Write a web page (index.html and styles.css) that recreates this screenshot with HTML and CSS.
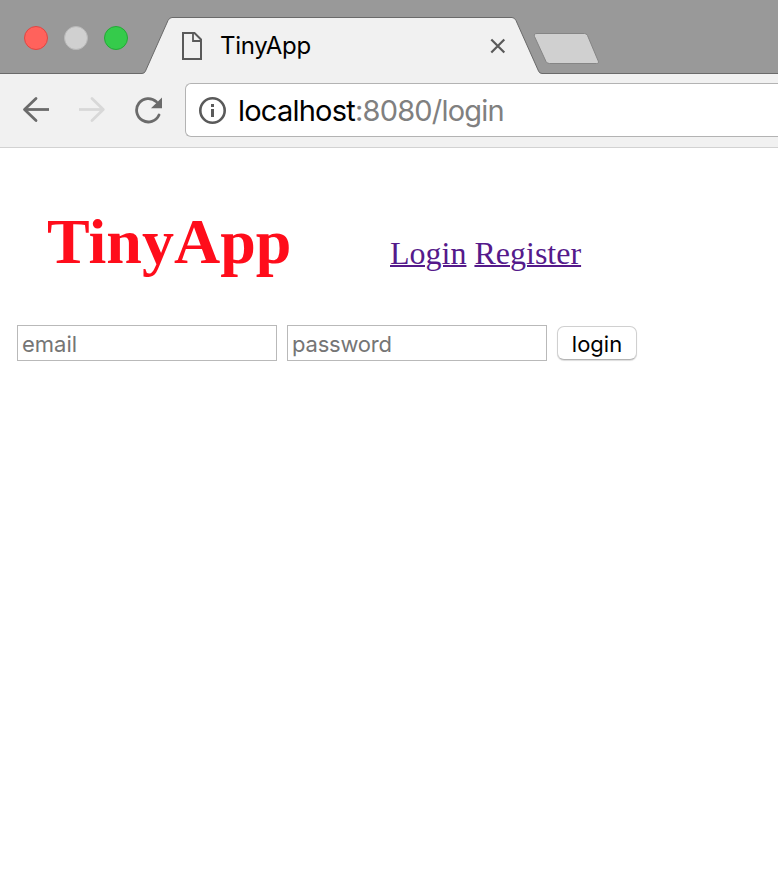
FILE: index.html
```
<!DOCTYPE html>
<html lang="en">
<head>
<meta charset="utf-8">
<title>TinyApp</title>
<link rel="stylesheet" href="styles.css">
</head>
<body>
<div class="tabstrip">
  <svg class="tab-shapes" width="778" height="74" viewBox="0 0 778 74">
    <path d="M0 74V73.5H142Q144.500 73.500 145.500 71L168 20.500Q169.500 17.500 172 17.500H512Q514.500 17.500 516 20.500L538.500 71Q539.500 73.500 542 73.500H778V74Z" fill="#f1f1f1"/>
    <path d="M0 73.500H142Q144.500 73.500 145.500 71L168 20.500Q169.500 17.500 172 17.500H512Q514.500 17.500 516 20.500L538.500 71Q539.500 73.500 542 73.500H778" fill="none" stroke="#6a6a6a"/>
    <path d="M537 33.500H584.500Q586.500 33.500 587.500 35.500L598 60.500Q599.500 63.500 596.500 63.500H549.500Q547 63.500 546 61.500L534.500 36.500Q533.500 33.500 537 33.500Z" fill="#d0d0d0" stroke="#858585"/>
  </svg>
  <div class="lights">
    <span class="light red"></span><span class="light gray"></span><span class="light green"></span>
  </div>
  <div class="tab">
    <svg width="22" height="28" viewBox="0 0 22 28" fill="none" stroke="#5a5a5a" stroke-width="2"><path d="M2 1H13.500L20 7.500V27H2Z"/><path d="M12 1V9H20" stroke-width="1.800"/></svg>
    <span class="tab-title">TinyApp</span>
    <svg class="close" width="16" height="16" viewBox="0 0 16 16" stroke="#5a5a5a" stroke-width="2.200"><path d="M1.300 1.500L14.300 14.500M14.300 1.500L1.300 14.500"/></svg>
  </div>
</div>
<div class="toolbar">
  <svg class="nav" width="28" height="28" viewBox="0 0 28 28" fill="none" stroke="#6b6b6b" stroke-width="2.800" stroke-linecap="round"><path d="M14 2.500L2.500 13.500L14 24.500" stroke-linejoin="round"/><path d="M3 13.500H27" stroke-linecap="butt"/></svg>
  <svg class="nav" width="28" height="28" viewBox="0 0 28 28" fill="none" stroke="#d8d8d8" stroke-width="2.800" stroke-linecap="round"><path d="M14 2.500L25.300 13.500L14 24.500" stroke-linejoin="round"/><path d="M1 13.500H25" stroke-linecap="butt"/></svg>
  <svg class="nav" width="28" height="28" viewBox="0 0 28 28" fill="none" stroke="#6b6b6b" stroke-width="2.800"><path d="M22.400 5.800A11.700 11.700 0 1 0 25 19" stroke-linecap="round"/><path d="M28 1.500V12.300H17Z" fill="#6b6b6b" stroke="none"/></svg>
  <div class="address">
    <svg width="28" height="28" viewBox="0 0 28 28"><circle cx="14.500" cy="14.500" r="12.200" fill="none" stroke="#5a5a5a" stroke-width="2.600"/><path d="M13 8h3v3h-3zM13 13h3v8h-3z" fill="#5a5a5a"/></svg>
    <span class="url">localhost<span class="path">:8080/login</span></span>
  </div>
</div>
<main>
  <header>
    <h1>TinyApp</h1>
    <nav><a href="#">Login</a> <a href="#">Register</a></nav>
  </header>
  <form>
    <input class="email" type="text" placeholder="email">
    <input class="password" type="password" placeholder="password">
    <button type="button">login</button>
  </form>
</main>
</body>
</html>
```
FILE: styles.css
```
* { box-sizing: border-box; }
body { margin: 0; height: 892px; overflow: hidden; background: #fff; font-family: Inter, "Liberation Sans", sans-serif; }
svg { display: block; flex: none; }
.tabstrip { position: relative; display: flex; height: 74px; background: #999; }
.tab-shapes { position: absolute; left: 0; top: 0; }
.lights { position: relative; display: flex; gap: 16px; padding: 26px 0 0 24px; width: 181px; }
.light { width: 24px; height: 24px; border-radius: 50%; border: 1px solid; }
.red { background: #ff625c; border-color: #df4643; }
.gray { background: #d0d0d0; border-color: #b8b8b8; }
.green { background: #35cb4b; border-color: #24a936; }
.tab { position: relative; display: flex; width: 325px; height: 56px; margin-top: 18px; align-items: center; }
.tab-title { margin-left: 17px; font-size: 24px; line-height: 30px; letter-spacing: -0.3px; color: #000; }
.close { margin-left: auto; }
.toolbar { display: flex; align-items: center; height: 74px; padding: 0 0 2px 22px; background: #f1f1f1; border-bottom: 1px solid #d2d2d2; }
.nav { margin-right: 28px; }
.nav:nth-child(3) { margin-right: 23px; }
.address { display: flex; align-items: center; flex: 1; height: 54px; border: 1px solid #b3b3b3; border-right: 0; border-radius: 6px 0 0 6px; background: #fff; padding-left: 12px; }
.url { margin: 2px 0 0 12px; font-size: 29px; line-height: 36px; letter-spacing: -0.78px; color: #000; white-space: nowrap; }
.path { color: #808080; }
header { display: flex; align-items: flex-start; padding: 57px 0 0 47px; height: 177px; font-family: "Liberation Serif", serif; }
h1 { margin: 0; width: 343px; font-size: 64px; line-height: 74px; color: #ff0d1b; }
nav { margin-top: 29px; font-size: 32px; line-height: 38px; white-space: nowrap; }
a { color: #551a8b; text-decoration: underline; text-decoration-thickness: 2px; }
form { display: flex; align-items: flex-start; gap: 10px; padding-left: 17px; }
input { width: 260px; height: 36px; margin: 0; padding: 2px 4px 0; border: 1px solid #b9b9b9; border-radius: 0; background: #fff; font: 22px Inter, sans-serif; }
.password { letter-spacing: -0.2px; }
input::placeholder { color: #757575; opacity: 1; }
button { width: 80px; height: 34px; margin: 1px 0 0; padding: 1px 0 0; border: 1px solid #d0d0d0; border-bottom-color: #b4b4b4; border-radius: 7px; background: #fff; box-shadow: 0 1px 1px #ddd; font: 22px Inter, sans-serif; color: #000; }
```
